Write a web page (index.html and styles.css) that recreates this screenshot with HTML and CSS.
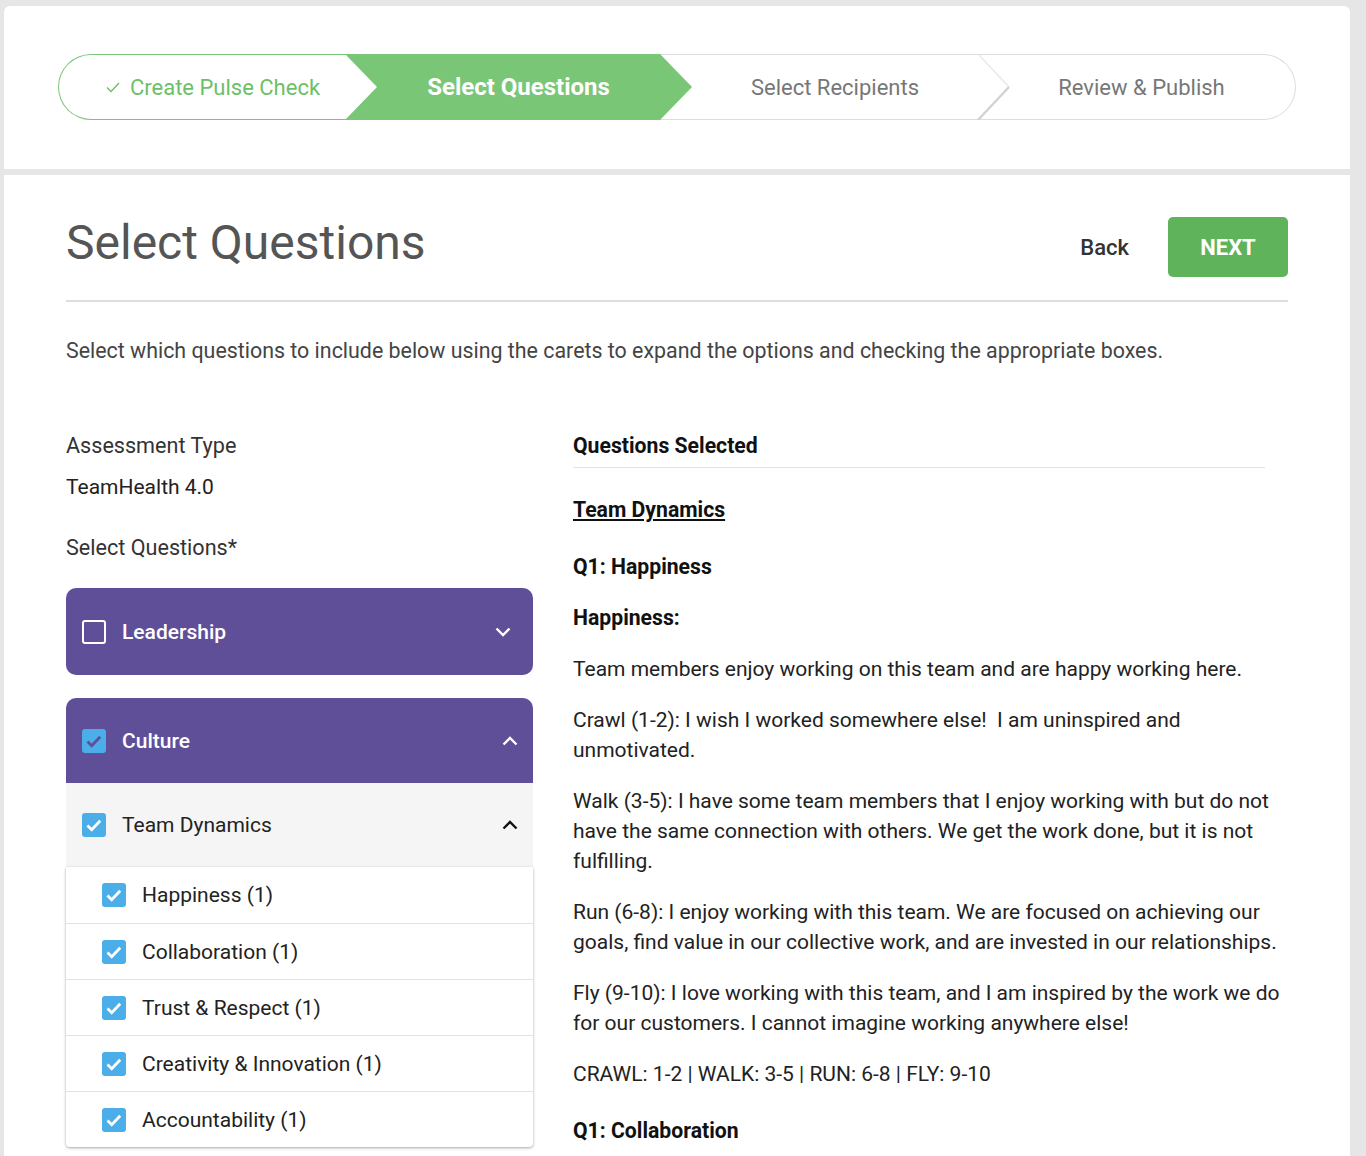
FILE: index.html
```html
<!DOCTYPE html>
<html lang="en">
<head>
    <meta charset="UTF-8">
    <meta name="viewport" content="width=device-width, initial-scale=1.0">
    <title>Select Questions</title>
    <link rel="stylesheet" href="styles.css">
</head>
<body>
    <!-- Wizard steps -->
    <div class="card stepper-card">
        <div class="stepper">
            <div class="step step-done">
                <svg class="step-check" width="14" height="11" viewBox="0 0 14 11"><path d="M1 5.5l4 4L13 1" fill="none" stroke="#6cc068" stroke-width="1.4"/></svg>
                Create Pulse Check
            </div>
            <div class="step step-active">Select Questions</div>
            <div class="step step-next">
                Select Recipients
                <svg class="step-sep" width="34" height="66" viewBox="0 0 34 66">
                    <path d="M1 0L32 33" fill="none" stroke="#e4e6ea" stroke-width="1.2"/>
                    <path d="M32 33L1 66" fill="none" stroke="#cfd2d8" stroke-width="2.4"/>
                </svg>
            </div>
            <div class="step step-last">Review &amp; Publish</div>
        </div>
    </div>

    <!-- Main content -->
    <div class="card content-card">
        <div class="page-header">
            <h1>Select Questions</h1>
            <div class="header-actions">
                <button class="btn-back">Back</button>
                <button class="btn-next">NEXT</button>
            </div>
        </div>

        <p class="intro">Select which questions to include below using the carets to expand the options and checking the appropriate boxes.</p>

        <div class="columns">
            <div class="left-col">
                <div class="field-label">Assessment Type</div>
                <div class="field-value">TeamHealth 4.0</div>
                <div class="field-label select-label">Select Questions*</div>

                <div class="group group-closed">
                    <span class="cb cb-empty"></span>
                    <span class="group-title">Leadership</span>
                    <svg class="caret caret-down" width="16" height="10" viewBox="0 0 16 10"><path d="M1.5 1.5l6.5 6.5 6.5-6.5" fill="none" stroke="#fff" stroke-width="2.4"/></svg>
                </div>

                <div class="group group-open">
                    <span class="cb cb-on"><svg width="24" height="24" viewBox="0 0 24 24"><path d="M5.5 12.5l4.2 4.2 8.5-9" fill="none" stroke="#5f4f99" stroke-width="2.8"/></svg></span>
                    <span class="group-title">Culture</span>
                    <svg class="caret" width="16" height="10" viewBox="0 0 16 10"><path d="M1.5 8.5l6.5-6.5 6.5 6.5" fill="none" stroke="#fff" stroke-width="2.4"/></svg>
                </div>

                <div class="subgroup">
                    <span class="cb cb-on"><svg width="24" height="24" viewBox="0 0 24 24"><path d="M5.5 12.5l4.2 4.2 8.5-9" fill="none" stroke="#fff" stroke-width="2.8"/></svg></span>
                    <span class="subgroup-title">Team Dynamics</span>
                    <svg class="caret" width="16" height="10" viewBox="0 0 16 10"><path d="M1.5 8.5l6.5-6.5 6.5 6.5" fill="none" stroke="#111" stroke-width="2.4"/></svg>
                </div>

                <ul class="items">
                    <li><span class="cb cb-on"><svg width="24" height="24" viewBox="0 0 24 24"><path d="M5.5 12.5l4.2 4.2 8.5-9" fill="none" stroke="#fff" stroke-width="2.8"/></svg></span>Happiness (1)</li>
                    <li><span class="cb cb-on"><svg width="24" height="24" viewBox="0 0 24 24"><path d="M5.5 12.5l4.2 4.2 8.5-9" fill="none" stroke="#fff" stroke-width="2.8"/></svg></span>Collaboration (1)</li>
                    <li><span class="cb cb-on"><svg width="24" height="24" viewBox="0 0 24 24"><path d="M5.5 12.5l4.2 4.2 8.5-9" fill="none" stroke="#fff" stroke-width="2.8"/></svg></span>Trust &amp; Respect (1)</li>
                    <li><span class="cb cb-on"><svg width="24" height="24" viewBox="0 0 24 24"><path d="M5.5 12.5l4.2 4.2 8.5-9" fill="none" stroke="#fff" stroke-width="2.8"/></svg></span>Creativity &amp; Innovation (1)</li>
                    <li><span class="cb cb-on"><svg width="24" height="24" viewBox="0 0 24 24"><path d="M5.5 12.5l4.2 4.2 8.5-9" fill="none" stroke="#fff" stroke-width="2.8"/></svg></span>Accountability (1)</li>
                </ul>
            </div>

            <div class="right-col">
                <h3 class="selected-title">Questions Selected</h3>
                <h4 class="category">Team Dynamics</h4>
                <h4 class="question">Q1: Happiness</h4>
                <p class="q-label">Happiness:</p>
                <p>Team members enjoy working on this team and are happy working here.</p>
                <p>Crawl (1-2): I wish I worked somewhere else!&nbsp; I am uninspired and unmotivated.</p>
                <p>Walk (3-5): I have some team members that I enjoy working with but do not have the same connection with others. We get the work done, but it is not fulfilling.</p>
                <p>Run (6-8): I enjoy working with this team. We are focused on achieving our goals, find value in our collective work, and are invested in our relationships.</p>
                <p>Fly (9-10): I love working with this team, and I am inspired by the work we do for our customers. I cannot imagine working anywhere else!</p>
                <p>CRAWL: 1-2 | WALK: 3-5 | RUN: 6-8 | FLY: 9-10</p>
                <h4 class="question">Q1: Collaboration</h4>
            </div>
        </div>
    </div>
</body>
</html>
```

FILE: styles.css
```css
/* Page */
body {
    margin: 0;
    padding: 6px 16px 0 4px;
    background-color: #e6e6e6;
    font-family: Roboto, "Liberation Sans", sans-serif;
    color: #222;
    overflow: hidden;
}

.card {
    background: #fff;
}

/* Stepper card */
.stepper-card {
    border-radius: 6px 6px 0 0;
    padding: 48px 54px 49px;
}

.stepper {
    display: flex;
    height: 66px;
}

.step {
    position: relative;
    box-sizing: border-box;
    height: 66px;
    display: flex;
    align-items: center;
    justify-content: center;
    font-size: 22px;
    color: #777;
}

.step-done {
    width: 319px;
    padding-right: 10px;
    border: 1px solid #79c676;
    border-right: none;
    border-radius: 33px 0 0 33px;
    color: #6cc068;
    gap: 10px;
}

.step-active {
    width: 347px;
    margin-left: -32px;
    z-index: 2;
    background: #79c676;
    color: #fff;
    font-size: 24px;
    font-weight: 700;
    clip-path: polygon(0 0, calc(100% - 32px) 0, 100% 50%, calc(100% - 32px) 100%, 0 100%, 32px 50%);
}

.step-next {
    width: 350px;
    margin-left: -32px;
    z-index: 1;
    border-top: 1px solid #dcdde1;
    border-bottom: 1px solid #dcdde1;
}

.step-sep {
    position: absolute;
    right: -1px;
    top: -1px;
}

.step-last {
    flex: 1;
    padding-right: 22px;
    border: 1px solid #dcdde1;
    border-left: none;
    border-radius: 0 33px 33px 0;
}

/* Content card */
.content-card {
    margin-top: 6px;
    padding: 42px 62px 80px;
}

.page-header {
    display: flex;
    align-items: center;
    justify-content: space-between;
    padding-bottom: 23px;
    border-bottom: 2px solid #dcdde0;
}

h1 {
    margin: 0;
    padding-bottom: 8px;
    font-size: 48px;
    font-weight: 400;
    line-height: 52px;
    color: #555;
}

.header-actions {
    display: flex;
    align-items: center;
    gap: 39px;
}

button {
    font-family: inherit;
    border: none;
    cursor: pointer;
}

.btn-back {
    background: none;
    padding: 0;
    font-size: 22px;
    font-weight: 500;
    color: #333;
}

.btn-next {
    width: 120px;
    height: 60px;
    background: #5fb35a;
    border-radius: 5px;
    color: #fff;
    font-size: 22px;
    font-weight: 700;
}

.intro {
    margin: 34px 0 0;
    font-size: 21.4px;
    line-height: 30px;
    color: #444;
}

/* Two columns */
.columns {
    display: grid;
    grid-template-columns: 467px 715px;
    column-gap: 40px;
    margin-top: 65px;
}

.field-label {
    font-size: 21.6px;
    line-height: 30px;
    color: #333;
}

.field-value {
    margin-top: 11px;
    font-size: 21px;
    line-height: 30px;
    color: #222;
}

.select-label {
    margin-top: 31px;
}

/* Checkboxes */
.cb {
    flex: none;
    box-sizing: border-box;
    width: 24px;
    height: 24px;
    border-radius: 3px;
    display: inline-block;
}

.cb svg {
    display: block;
}

.cb-empty {
    border: 2.5px solid #fff;
}

.cb-on {
    background: #4caee8;
}

/* Accordion groups */
.group {
    display: flex;
    align-items: center;
    gap: 16px;
    padding: 0 15px 0 16px;
    background: #5f4f99;
    color: #fff;
    font-size: 21px;
    font-weight: 500;
}

.group-closed {
    height: 87px;
    margin-top: 25px;
    border-radius: 10px;
    padding-right: 22px;
}

.group-open {
    height: 85px;
    margin-top: 23px;
    border-radius: 10px 10px 0 0;
}

.group-title, .subgroup-title {
    flex: 1;
}

.caret {
    flex: none;
}

.subgroup {
    display: flex;
    align-items: center;
    gap: 16px;
    height: 84px;
    padding: 0 15px 0 16px;
    background: #f5f5f5;
    font-size: 21px;
    color: #222;
}

.items {
    list-style: none;
    margin: 0;
    padding: 0;
    background: #fff;
    border-radius: 0 0 4px 4px;
    box-shadow: 0 1px 3px rgba(0,0,0,0.35);
}

.items li {
    display: flex;
    align-items: center;
    gap: 16px;
    box-sizing: border-box;
    height: 56px;
    padding-left: 36px;
    border-top: 1px solid #e2e2e2;
    font-size: 21px;
    color: #222;
}

.items li:first-child {
    border-top: none;
}

/* Selected questions */
.right-col {
    font-size: 21px;
    line-height: 30px;
    color: #222;
}

.right-col h3, .right-col h4 {
    margin: 0;
    font-size: 21.2px;
    line-height: 30px;
    font-weight: 700;
    color: #111;
}

.selected-title {
    width: 692px;
    padding-bottom: 6px;
    border-bottom: 1px solid #e2e2e2;
}

.right-col .category {
    margin-top: 27px;
    text-decoration: underline;
}

.right-col .question {
    margin-top: 27px;
}

.right-col p {
    margin: 21px 0 0;
}

.right-col p:last-of-type {
    margin-bottom: 2px;
}

.right-col .q-label {
    font-size: 21.2px;
    font-weight: 700;
    color: #111;
}
```
